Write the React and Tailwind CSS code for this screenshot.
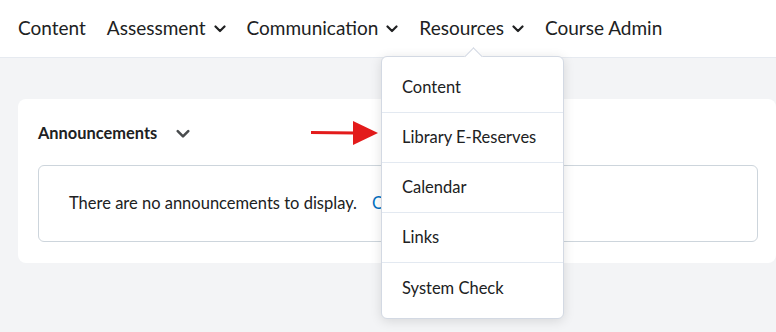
import React from 'react';

const Chevron = ({ className = '' }) => (
  <svg className={className} viewBox="0 0 12 8" fill="none">
    <path d="M1.5 1.5 L6 6 L10.5 1.5" stroke="currentColor" strokeWidth="2.2" strokeLinecap="round" strokeLinejoin="round" />
  </svg>
);

const navItems = [
  { label: 'Content' },
  { label: 'Assessment', menu: true },
  { label: 'Communication', menu: true },
  { label: 'Resources', menu: true },
  { label: 'Course Admin' },
];

const menuItems = ['Content', 'Library E-Reserves', 'Calendar', 'Links', 'System Check'];

export default function App() {
  return (
    <div
      className="relative w-[776px] h-[332px] overflow-hidden bg-[#f3f4f6] text-[#202122]"
      style={{ fontFamily: 'Lato, "Noto Sans", sans-serif' }}
    >
      {/* Top nav */}
      <nav className="h-[58px] bg-white border-b border-[#e6eaf0] flex items-center pb-[1px] pl-[18px] gap-[21px] text-[19px]">
        {navItems.map((item) => (
          <div key={item.label} className="flex items-center gap-[8px]">
            <span>{item.label}</span>
            {item.menu && <Chevron className="w-[12px] h-[8px] mt-[2px] text-[#202122]" />}
          </div>
        ))}
      </nav>

      {/* Announcements widget */}
      <div className="mt-[41px] ml-[18px] w-[758px] bg-white rounded-[8px] pt-[23px] pb-[21px] pl-[20px] pr-[18px]">
        <div className="flex items-center h-[22px]">
          <span className="text-[16.4px] font-bold">Announcements</span>
          <Chevron className="w-[14px] h-[10px] ml-[19px] mt-[1px] text-[#494c4e]" />
        </div>
        <div className="mt-[21px] h-[77px] border border-[#cdd5dc] rounded-[6px] flex items-center pl-[30px] text-[16.5px]">
          <span>There are no announcements to display.</span>
          <span className="ml-[15px] text-[#006fbf]">Create an announcement</span>
        </div>
      </div>

      {/* Red arrow */}
      <svg className="absolute left-[309px] top-[119px]" width="72" height="28" viewBox="0 0 72 28">
        <path d="M2 12 L46 12.5 L46 15.5 L2 15 Z" fill="#e31b1b" />
        <path d="M44 2 L69 14 L44 26 Z" fill="#e31b1b" />
      </svg>

      {/* Dropdown menu */}
      <div className="absolute left-[381px] top-[56px] w-[183px] bg-white border border-[#d3d9e3] rounded-[6px] shadow-[0_2px_12px_rgba(0,0,0,0.12)] pt-[6px] pb-[5px]">
        <div className="absolute -top-[7px] left-[85px] w-[13px] h-[13px] bg-white border-l border-t border-[#d3d9e3] rotate-45" />
        {menuItems.map((m, i) => (
          <div
            key={m}
            className={`relative h-[50px] flex items-center pl-[20px] text-[16.5px] ${i < menuItems.length - 1 ? 'border-b border-[#e3e9f1]' : ''}`}
          >
            {m}
          </div>
        ))}
      </div>
    </div>
  );
}
